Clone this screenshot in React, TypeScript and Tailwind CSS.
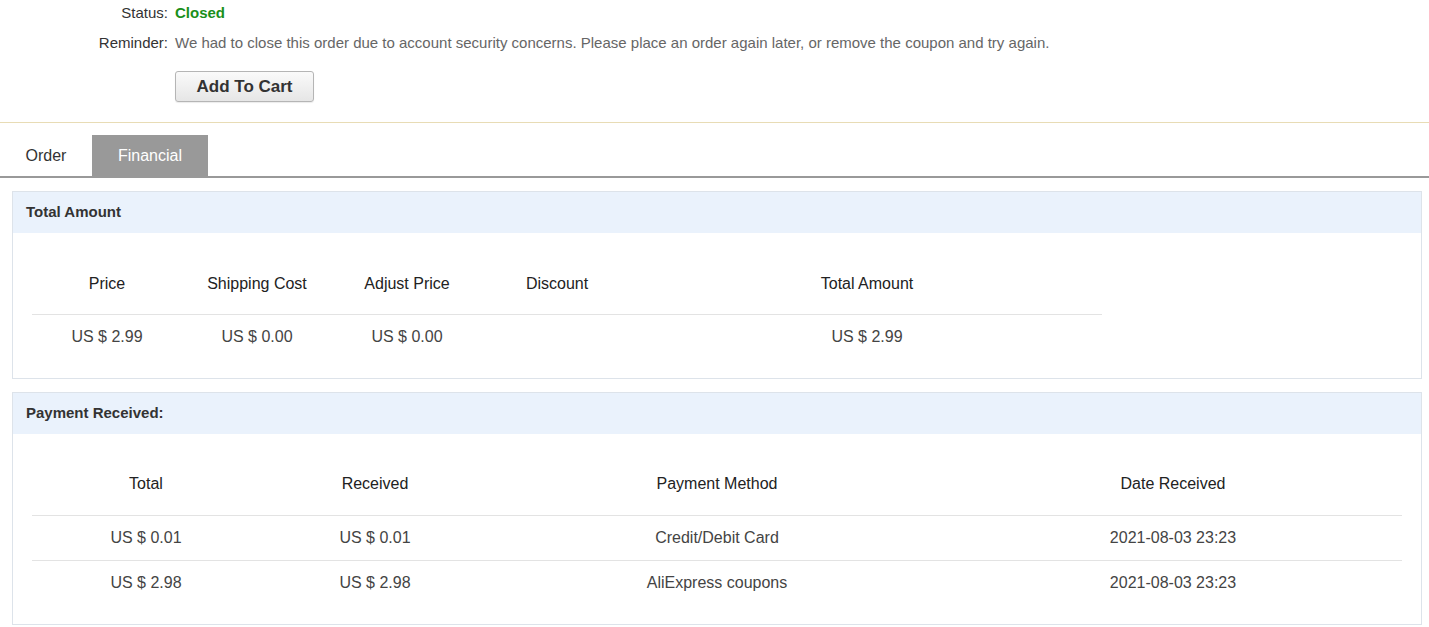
import React from "react";

type PayRow = { total: string; received: string; method: string; date: string };

const payments: PayRow[] = [
  { total: "US $ 0.01", received: "US $ 0.01", method: "Credit/Debit Card", date: "2021-08-03 23:23" },
  { total: "US $ 2.98", received: "US $ 2.98", method: "AliExpress coupons", date: "2021-08-03 23:23" },
];

function PanelHead({ title }: { title: string }) {
  return (
    <div className="flex h-[41px] items-center bg-[#eaf2fc] pl-[13px] text-[15px] font-bold text-[#333]">
      {title}
    </div>
  );
}

export default function App() {
  return (
    <main className="min-h-screen bg-white pb-4 font-['Liberation_Sans',Arial,sans-serif] text-[#333]">
      {/* order status */}
      <div className="pt-[3px]">
        <div className="flex h-[20px] items-center text-[15px]">
          <div className="w-[168px] text-right text-[#333]">Status:</div>
          <div className="pl-[7px] font-bold text-[#1a8f1a]">Closed</div>
        </div>
        <div className="mt-[10px] flex h-[20px] items-center text-[15px]">
          <div className="w-[168px] text-right text-[#333]">Reminder:</div>
          <div className="pl-[7px] text-[#666]">
            We had to close this order due to account security concerns. Please place an order again later, or remove the coupon and try again.
          </div>
        </div>
        <div className="mt-[18px] pl-[175px]">
          <button className="h-[31px] w-[139px] rounded-[3px] border border-[#b5b5b5] bg-gradient-to-b from-[#fafafa] to-[#e6e6e6] pt-px text-[17px] font-bold text-[#333] shadow-[0_1px_1px_rgba(0,0,0,0.08)]">
            Add To Cart
          </button>
        </div>
      </div>

      <div className="mt-[20px] h-px bg-[#e8dcb5]" />

      {/* tabs */}
      <div className="mt-[12px] flex border-b-2 border-[#999]">
        <div className="flex h-[41px] w-[92px] items-center justify-center text-[16px] text-[#333]">Order</div>
        <div className="flex h-[41px] w-[116px] items-center justify-center bg-[#999] text-[16px] text-white">Financial</div>
      </div>

      {/* total amount */}
      <section className="ml-[12px] mr-[7px] mt-[13px] border border-[#dde3ea]">
        <PanelHead title="Total Amount" />
        <div className="px-[19px] pb-[19px] pt-[21px]">
          <table className="w-[1070px] table-fixed border-collapse text-[16px]">
            <colgroup>
              <col className="w-[150px]" />
              <col className="w-[150px]" />
              <col className="w-[150px]" />
              <col className="w-[150px]" />
              <col className="w-[470px]" />
            </colgroup>
            <thead>
              <tr className="h-[60px] text-[#222]">
                <th className="font-normal">Price</th>
                <th className="font-normal">Shipping Cost</th>
                <th className="font-normal">Adjust Price</th>
                <th className="font-normal">Discount</th>
                <th className="font-normal">Total Amount</th>
              </tr>
            </thead>
            <tbody>
              <tr className="h-[45px] border-t border-[#e3e3e3] text-center text-[#444]">
                <td>US $ 2.99</td>
                <td>US $ 0.00</td>
                <td>US $ 0.00</td>
                <td></td>
                <td>US $ 2.99</td>
              </tr>
            </tbody>
          </table>
        </div>
      </section>

      {/* payment received */}
      <section className="ml-[12px] mr-[7px] mt-[13px] border border-[#dde3ea]">
        <PanelHead title="Payment Received:" />
        <div className="px-[19px] pb-[19px] pt-[20px]">
          <table className="w-full table-fixed border-collapse text-[16px]">
            <colgroup>
              <col className="w-[228px]" />
              <col className="w-[230px]" />
              <col className="w-[454px]" />
              <col />
            </colgroup>
            <thead>
              <tr className="h-[61px] text-[#222]">
                <th className="font-normal">Total</th>
                <th className="font-normal">Received</th>
                <th className="font-normal">Payment Method</th>
                <th className="font-normal">Date Received</th>
              </tr>
            </thead>
            <tbody>
              {payments.map((p, i) => (
                <tr key={i} className="h-[45px] border-t border-[#e3e3e3] text-center text-[#444]">
                  <td>{p.total}</td>
                  <td>{p.received}</td>
                  <td>{p.method}</td>
                  <td>{p.date}</td>
                </tr>
              ))}
            </tbody>
          </table>
        </div>
      </section>
    </main>
  );
}
